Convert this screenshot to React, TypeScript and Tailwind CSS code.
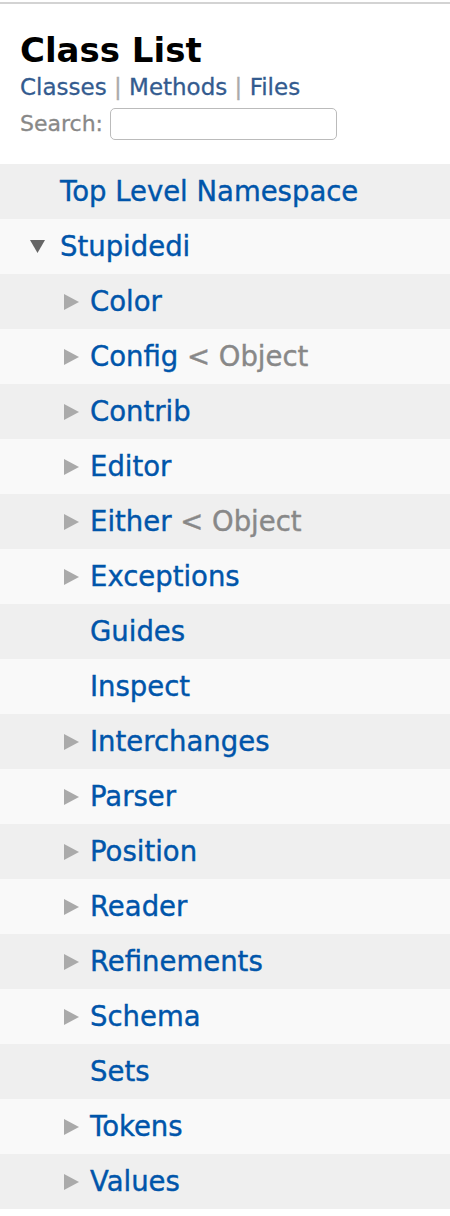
import React from "react";

type Item = {
  name: string;
  level: number;
  toggle?: "open" | "closed";
  parent?: string;
};

const items: Item[] = [
  { name: "Top Level Namespace", level: 0 },
  { name: "Stupidedi", level: 0, toggle: "open" },
  { name: "Color", level: 1, toggle: "closed" },
  { name: "Config", level: 1, toggle: "closed", parent: "Object" },
  { name: "Contrib", level: 1, toggle: "closed" },
  { name: "Editor", level: 1, toggle: "closed" },
  { name: "Either", level: 1, toggle: "closed", parent: "Object" },
  { name: "Exceptions", level: 1, toggle: "closed" },
  { name: "Guides", level: 1 },
  { name: "Inspect", level: 1 },
  { name: "Interchanges", level: 1, toggle: "closed" },
  { name: "Parser", level: 1, toggle: "closed" },
  { name: "Position", level: 1, toggle: "closed" },
  { name: "Reader", level: 1, toggle: "closed" },
  { name: "Refinements", level: 1, toggle: "closed" },
  { name: "Schema", level: 1, toggle: "closed" },
  { name: "Sets", level: 1 },
  { name: "Tokens", level: 1, toggle: "closed" },
  { name: "Values", level: 1, toggle: "closed" },
];

function Toggle({ kind }: { kind: "open" | "closed" }) {
  if (kind === "open") {
    return (
      <svg width="15" height="13" viewBox="0 0 15 13" className="shrink-0">
        <polygon points="0,0 15,0 7.5,13" fill="#666666" />
      </svg>
    );
  }
  return (
    <svg width="15" height="16" viewBox="0 0 15 16" className="shrink-0">
      <polygon points="0,0 15,8 0,16" fill="#aaaaaa" />
    </svg>
  );
}

export default function App() {
  return (
    <div className="w-[450px] h-[1216px] bg-white overflow-hidden" style={{ fontFamily: "'DejaVu Sans', 'Liberation Sans', sans-serif" }}>
      {/* top rule */}
      <div className="h-[2px] mt-[2px] bg-[#d3d3d3]" />

      {/* header */}
      <div className="pl-5 pt-[28px] h-[160px]">
        <h1 className="text-[34px] font-bold text-black leading-[36px]">Class List</h1>
        <div className="text-[23px] leading-[28px] mt-[5px] text-[#335b8f] [-webkit-text-stroke:0.3px_currentColor]">
          <span>Classes</span>
          <span className="text-[#aaaaaa]"> | </span>
          <span>Methods</span>
          <span className="text-[#aaaaaa]"> | </span>
          <span>Files</span>
        </div>
        <div className="flex items-center mt-[6px]">
          <span className="text-[22px] text-[#888888] mr-[7px] [-webkit-text-stroke:0.3px_currentColor]">Search:</span>
          <input
            type="text"
            className="w-[227px] h-[32px] border border-[#bbbbbb] rounded-[5px] bg-white"
          />
        </div>
      </div>

      {/* class list */}
      <ul>
        {items.map((it, i) => (
          <li
            key={it.name}
            className={`h-[55px] flex items-center ${i % 2 === 0 ? "bg-[#efefef]" : "bg-[#f9f9f9]"}`}
          >
            <div className={`flex items-center ${it.level === 0 ? "w-[60px] pl-[30px]" : "w-[90px] pl-[64px]"}`}>
              {it.toggle && <Toggle kind={it.toggle} />}
            </div>
            <span className="text-[27.5px] text-[#0055aa] whitespace-nowrap [-webkit-text-stroke:0.4px_currentColor]">{it.name}</span>
            {it.parent && (
              <span className="text-[27.5px] text-[#888888] whitespace-nowrap [-webkit-text-stroke:0.4px_currentColor]">&nbsp;&lt; {it.parent}</span>
            )}
          </li>
        ))}
      </ul>
    </div>
  );
}
